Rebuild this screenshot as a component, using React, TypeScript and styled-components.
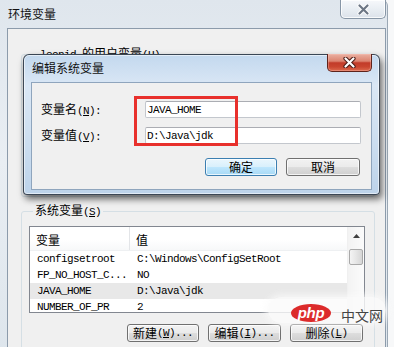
import React from "react";
import styled, { createGlobalStyle } from "styled-components";

const CJK = `"Noto Sans CJK SC", "Noto Sans", sans-serif`;
const MONO = `"Liberation Mono", "DejaVu Sans Mono", monospace`;

const GlobalStyle = createGlobalStyle`
  html, body { margin: 0; padding: 0; background: #f7f8f9; }
  body { font-family: ${CJK}; font-size: 12px; color: #000; }
  * { box-sizing: border-box; }
`;

const Screen = styled.div`
  position: relative;
  width: 394px;
  height: 347px;
  overflow: hidden;
  background: #f7f8f9;
  display: flex;
  align-items: flex-start;
`;

const OuterWindow = styled.div`
  width: 388px;
  height: 360px;
  flex: none;
  display: flex;
  flex-direction: column;
  padding: 0 1px 0 7px;
  background: linear-gradient(180deg, #dfe6ed 0%, #e9eef3 45%, #dde5ec 100%);
  border-right: 1px solid #9aa7b4;
  border-top-right-radius: 6px;
`;

const TitleBar = styled.div`
  height: 28px;
  flex: none;
  display: flex;
  justify-content: space-between;
  align-items: flex-start;
`;

const WindowTitle = styled.div<{ $top: number }>`
  margin: ${(p) => p.$top}px 0 0 1px;
  font-size: 12px;
  line-height: 12px;
  color: #111;
  white-space: nowrap;
`;

const CaptionButton = styled.div<{ $active?: boolean }>`
  width: ${(p) => (p.$active ? 45 : 46)}px;
  height: ${(p) => (p.$active ? 18 : 19)}px;
  flex: none;
  display: flex;
  align-items: center;
  justify-content: center;
  border: 1px solid ${(p) => (p.$active ? "#5e231b" : "#8796a6")};
  border-top: none;
  border-radius: 0 0 5px 5px;
  background: ${(p) =>
    p.$active
      ? "linear-gradient(180deg, #eab0a2 0%, #dc8470 42%, #c23b29 52%, #c9452f 75%, #dc6a4e 100%)"
      : "linear-gradient(180deg, #f6f8fb 0%, #e9eef3 50%, #dbe2ea 100%)"};
  box-shadow: inset 0 0 0 1px ${(p) => (p.$active ? "rgba(255,200,190,0.35)" : "rgba(255,255,255,0.8)")};
`;

const Content = styled.div`
  flex: 1;
  background: #f0f0f0;
  border: 1px solid #8c9bab;
  border-bottom: none;
  display: flex;
  flex-direction: column;
  padding: 18px 0 0 13px;
  overflow: hidden;
`;

const Group = styled.fieldset<{ $h?: number; $mt?: number }>`
  margin: ${(p) => p.$mt ?? 0}px 0 0 0;
  padding: 8px 9px 20px 7px;
  width: 354px;
  min-width: 0;
  ${(p) => (p.$h ? `height: ${p.$h}px;` : "")}
  flex: none;
  border: 1px solid #d5dfe5;
  border-radius: 3px;
  display: flex;
  flex-direction: column;
`;

const Legend = styled.legend<{ $offset: number }>`
  padding: 0 2px;
  margin-left: ${(p) => p.$offset}px;
  font-size: 12px;
  line-height: 12px;
  white-space: nowrap;
`;

const Ascii = styled.span`
  font-family: ${MONO};
  font-size: 11px;
  letter-spacing: -0.6px;
`;

const ListView = styled.div`
  height: 87px;
  border: 1px solid #828790;
  background: #fff;
  display: flex;
  overflow: hidden;
  flex: none;
`;

const Table = styled.div`
  flex: 1;
  min-width: 0;
  display: flex;
  flex-direction: column;
`;

const HeaderRow = styled.div`
  height: 24px;
  flex: none;
  display: grid;
  grid-template-columns: 100px 1fr;
  background: linear-gradient(180deg, #ffffff 0%, #ffffff 55%, #f7f8f9 100%);
  border-bottom: 1px solid #eef0f2;
`;

const HeaderCell = styled.div<{ $sep?: boolean }>`
  display: flex;
  align-items: center;
  padding: 2px 0 0 6px;
  font-size: 12px;
  line-height: 12px;
  ${(p) => (p.$sep ? "border-right: 1px solid #e3e5e8;" : "")}
`;

const Rows = styled.div`
  padding-top: 0;
  display: flex;
  flex-direction: column;
`;

const Row = styled.div<{ $selected?: boolean }>`
  height: 16px;
  flex: none;
  display: grid;
  grid-template-columns: 100px 1fr;
  align-items: center;
  background: ${(p) => (p.$selected ? "#e8e8e8" : "transparent")};
`;

const Cell = styled.div`
  padding-left: 7px;
  font-family: ${MONO};
  font-size: 11px;
  letter-spacing: -0.6px;
  white-space: nowrap;
  overflow: hidden;
`;

const ScrollBar = styled.div`
  width: 17px;
  flex: none;
  display: flex;
  flex-direction: column;
  align-items: center;
  padding-top: 7px;
  background: linear-gradient(90deg, #f3f3f3 0%, #fbfbfb 100%);
  border-left: 1px solid #f0f0f0;
`;

const Thumb = styled.div`
  margin-top: 11px;
  width: 14px;
  height: 16px;
  border: 1px solid #a9a9a9;
  border-radius: 2px;
  background: linear-gradient(90deg, #f4f4f4 0%, #e6e6e6 50%, #d6d6d6 100%);
`;

const ButtonRow = styled.div<{ $mt: number; $pr: number; $gap: number }>`
  margin-top: ${(p) => p.$mt}px;
  padding-right: ${(p) => p.$pr}px;
  display: flex;
  justify-content: flex-end;
  gap: ${(p) => p.$gap}px;
`;

const Button = styled.button<{ $default?: boolean; $w: number }>`
  width: ${(p) => p.$w}px;
  height: 18px;
  padding: 0;
  margin: 0;
  font-family: ${CJK};
  font-size: 12px;
  line-height: 12px;
  color: #000;
  border: 1px solid ${(p) => (p.$default ? "#3c7fb1" : "#707070")};
  border-radius: 3px;
  background: ${(p) =>
    p.$default
      ? "linear-gradient(180deg, #eaf6fd 0%, #d9f0fc 48%, #bee6fd 52%, #a7d9f5 100%)"
      : "linear-gradient(180deg, #f2f2f2 0%, #ebebeb 48%, #dddddd 52%, #cfcfcf 100%)"};
  box-shadow: inset 0 0 0 1px rgba(255, 255, 255, 0.75);
  display: flex;
  align-items: center;
  justify-content: center;
  white-space: nowrap;
`;

const Dialog = styled.div`
  position: absolute;
  left: 23px;
  top: 54px;
  width: 357px;
  height: 141px;
  display: flex;
  flex-direction: column;
  padding: 0 7px 4px 7px;
  border: 1px solid rgba(35, 45, 58, 0.85);
  border-radius: 6px 6px 4px 4px;
  background: linear-gradient(180deg, #c3d8ee 0%, #dae7f5 22%, #cfe0f1 55%, #bdd3ea 100%);
  box-shadow: 2px 4px 7px rgba(0, 0, 0, 0.6), inset 0 0 0 1px rgba(255, 255, 255, 0.55);
`;

const DialogTitleBar = styled.div`
  height: 28px;
  flex: none;
  display: flex;
  justify-content: space-between;
  align-items: flex-start;
  margin-top: -1px;
`;

const DialogClient = styled.div`
  flex: 1;
  background: #f0f0f0;
  border: 1px solid #8fa5bd;
  display: flex;
  flex-direction: column;
  padding: 18px 0 0 9px;
`;

const FieldGrid = styled.div`
  display: grid;
  grid-template-columns: 104px 216px;
  row-gap: 9px;
  align-items: center;
`;

const FieldLabel = styled.label`
  font-size: 12px;
  line-height: 12px;
  white-space: nowrap;
`;

const TextBox = styled.div`
  height: 17px;
  border: 1px solid #c3c7cd;
  border-top-color: #abadb3;
  border-radius: 2px;
  background: #fff;
  padding-left: 1px;
  display: flex;
  align-items: center;
  font-family: ${MONO};
  font-size: 11px;
  letter-spacing: -0.6px;
  white-space: nowrap;
`;

const Highlight = styled.div`
  position: absolute;
  left: 134px;
  top: 96px;
  width: 104px;
  height: 50px;
  border: 3px solid #e8302c;
  pointer-events: none;
`;

const Watermark = styled.div`
  position: absolute;
  left: 268px;
  top: 297px;
  width: 118px;
  height: 26px;
  border-radius: 13px;
  background: rgba(250, 250, 250, 0.82);
  box-shadow: 0 0 6px 3px rgba(250, 250, 250, 0.7);
  display: flex;
  align-items: flex-end;
  padding: 0 0 1px 23px;
  gap: 10px;
`;

const PhpBadge = styled.span`
  width: 40px;
  height: 18px;
  border-radius: 50%;
  background: #dc2b2b;
  color: #fff;
  font-family: "Liberation Sans", Arial, sans-serif;
  font-style: italic;
  font-weight: bold;
  font-size: 15px;
  line-height: 17px;
  text-align: center;
  letter-spacing: -0.3px;
`;

const CnText = styled.span`
  font-size: 14px;
  line-height: 14px;
  color: #444;
`;

const CloseIcon = ({ active }: { active?: boolean }) => (
  <svg width="13" height="11" viewBox="0 0 13 11">
    <path
      d="M2.5 1.5 L10.5 9.5 M10.5 1.5 L2.5 9.5"
      stroke={active ? "#4a1a14" : "#ffffff"}
      strokeWidth={active ? 4.2 : 4}
      strokeLinecap="round"
    />
    <path
      d="M2.5 1.5 L10.5 9.5 M10.5 1.5 L2.5 9.5"
      stroke={active ? "#ffffff" : "#6c7684"}
      strokeWidth={2.2}
      strokeLinecap="round"
    />
  </svg>
);

const UpArrow = () => (
  <svg width="7" height="4" viewBox="0 0 7 4">
    <path d="M0 4 L3.5 0 L7 4 Z" fill="#404040" />
  </svg>
);

const rows = [
  { name: "configsetroot", value: "C:\\Windows\\ConfigSetRoot" },
  { name: "FP_NO_HOST_C...", value: "NO" },
  { name: "JAVA_HOME", value: "D:\\Java\\jdk", selected: true },
  { name: "NUMBER_OF_PR", value: "2" },
];

export default function App() {
  return (
    <>
      <GlobalStyle />
      <Screen>
        <OuterWindow>
          <TitleBar>
            <WindowTitle $top={8}>环境变量</WindowTitle>
            <CaptionButton>
              <CloseIcon />
            </CaptionButton>
          </TitleBar>
          <Content>
            <Group $h={150}>
              <Legend $offset={9}>
                <Ascii>leonid </Ascii>的用户变量<Ascii>(<u>U</u>)</Ascii>
              </Legend>
            </Group>
            <Group $mt={7}>
              <Legend $offset={4}>
                系统变量<Ascii>(<u>S</u>)</Ascii>
              </Legend>
              <ListView>
                <Table>
                  <HeaderRow>
                    <HeaderCell $sep>变量</HeaderCell>
                    <HeaderCell>值</HeaderCell>
                  </HeaderRow>
                  <Rows>
                    {rows.map((r) => (
                      <Row key={r.name} $selected={r.selected}>
                        <Cell>{r.name}</Cell>
                        <Cell>{r.value}</Cell>
                      </Row>
                    ))}
                  </Rows>
                </Table>
                <ScrollBar>
                  <UpArrow />
                  <Thumb />
                </ScrollBar>
              </ListView>
              <ButtonRow $mt={11} $pr={2} $gap={9}>
                <Button $w={72}>
                  新建<Ascii>(<u>W</u>)...</Ascii>
                </Button>
                <Button $w={73}>
                  编辑<Ascii>(<u>I</u>)...</Ascii>
                </Button>
                <Button $w={73}>
                  删除<Ascii>(<u>L</u>)</Ascii>
                </Button>
              </ButtonRow>
            </Group>
          </Content>
        </OuterWindow>

        <Dialog>
          <DialogTitleBar>
            <WindowTitle $top={8}>编辑系统变量</WindowTitle>
            <CaptionButton $active>
              <CloseIcon active />
            </CaptionButton>
          </DialogTitleBar>
          <DialogClient>
            <FieldGrid>
              <FieldLabel>
                变量名<Ascii>(<u>N</u>):</Ascii>
              </FieldLabel>
              <TextBox>JAVA_HOME</TextBox>
              <FieldLabel>
                变量值<Ascii>(<u>V</u>):</Ascii>
              </FieldLabel>
              <TextBox>D:\Java\jdk</TextBox>
            </FieldGrid>
            <ButtonRow $mt={14} $pr={11} $gap={9}>
              <Button $default $w={72}>
                确定
              </Button>
              <Button $w={74}>取消</Button>
            </ButtonRow>
          </DialogClient>
        </Dialog>

        <Highlight />

        <Watermark>
          <PhpBadge>php</PhpBadge>
          <CnText>中文网</CnText>
        </Watermark>
      </Screen>
    </>
  );
}
